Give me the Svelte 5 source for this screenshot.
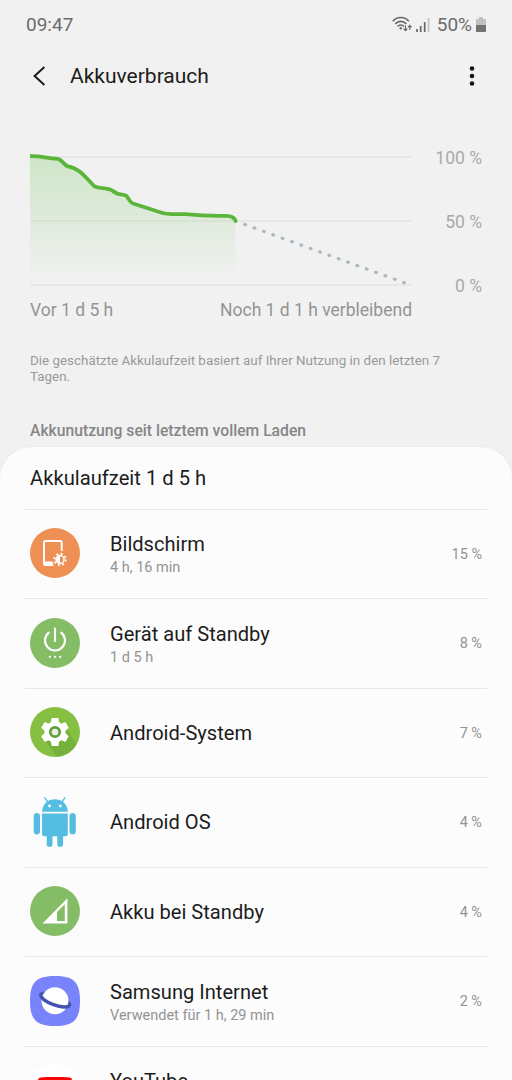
<script lang="ts">
    type App = { icon: string; name: string; detail?: string; percent?: number }

    const apps: App[] = [
        { icon: 'screen', name: 'Bildschirm', detail: '4 h, 16 min', percent: 15 },
        { icon: 'power', name: 'Gerät auf Standby', detail: '1 d 5 h', percent: 8 },
        { icon: 'gear', name: 'Android-System', percent: 7 },
        { icon: 'android', name: 'Android OS', percent: 4 },
        { icon: 'signal', name: 'Akku bei Standby', percent: 4 },
        { icon: 'internet', name: 'Samsung Internet', detail: 'Verwendet für 1 h, 29 min', percent: 2 },
        { icon: 'youtube', name: 'YouTube' }
    ]

    const level = 'M0 6.2 C12 5.8 16 8.5 28 8.8 C33 10 33 15 38 16.3 C50 18.5 56 28 64 36 C69 39.5 77 36.5 83 41 C88 45.5 92 44 96 45.5 C99 48 99 52 103 53.5 L131 62.5 C137 64.8 145 64 155 64.2 C168 65.5 180 66 196 65.8 C202 66 205 68.5 205.5 71'
</script>

<div class="screen">
    <div class="status">
        <span>09:47</span>
        <div class="status-right">
            <svg class="wifi" viewBox="0 0 20 16" width="20" height="16">
                <g fill="none" stroke="#666" stroke-width="1.6">
                    <path d="M.8 5.2 C5 .2 12.5 .2 16.8 5.2" />
                    <path d="M3.2 8 C6.3 4.5 11.3 4.5 14.4 8" />
                    <path d="M5.6 10.5 C7.5 8.5 10 8.5 12 10.5" />
                    <path d="M13.5 9.5 V14.5 M11.7 12.7 L13.5 14.6 L15.3 12.7 M17.8 14 V9.5 M16 11.3 L17.8 9.4 L19.6 11.3" stroke-width="1.1" />
                </g>
                <circle cx="8.8" cy="12.2" r="1.2" fill="#666" />
            </svg>
            <svg class="bars" viewBox="0 0 14 15" width="14" height="15">
                <path d="M1 12 V15 M4.7 9 V15 M8.7 5 V15" stroke="#666" stroke-width="1.7" />
                <path d="M12.6 1 V15" stroke="#c4c4c4" stroke-width="1.7" />
            </svg>
            <span>50%</span>
            <svg class="battery" viewBox="0 0 10 15" width="10" height="15">
                <path d="M3 0 H7 V2 H9.2 Q10 2 10 2.8 V8 H0 V2.8 Q0 2 .8 2 H3z" fill="#c0c0c0" />
                <path d="M0 8 H10 V14.2 Q10 15 9.2 15 H.8 Q0 15 0 14.2z" fill="#727272" />
            </svg>
        </div>
    </div>

    <header>
        <svg class="back" viewBox="0 0 14 20" width="14" height="20">
            <path d="M12.4 1 L2.6 10 L12.4 19" fill="none" stroke="#1c1c1c" stroke-width="2" />
        </svg>
        <h1>Akkuverbrauch</h1>
        <svg viewBox="0 0 6 20" width="6" height="20" fill="#161616">
            <circle cx="3" cy="2.5" r="2.3" />
            <circle cx="3" cy="10" r="2.3" />
            <circle cx="3" cy="17.5" r="2.3" />
        </svg>
    </header>

    <div class="chart">
        <svg viewBox="0 0 382 144" width="382" height="144">
            <defs>
                <linearGradient id="fade" x1="0" y1="0" x2="0" y2="1">
                    <stop offset="0" stop-color="#62c14a" stop-opacity=".25" />
                    <stop offset="1" stop-color="#62c14a" stop-opacity="0" />
                </linearGradient>
            </defs>
            <path d="M0 7 H382 M0 71 H382 M0 135 H382" stroke="#e4e4e4" stroke-width="1.3" />
            <path d="{level} V133 H0z" fill="url(#fade)" />
            <path d={level} fill="none" stroke="#5bb53b" stroke-width="3.8" stroke-linejoin="round" />
            <circle cx="205.6" cy="71" r="1.9" fill="#5bb53b" />
            <path d="M214.8 74.5 L375 133" stroke="#adb9c0" stroke-width="3.2" stroke-linecap="round" stroke-dasharray=".8 9.15" />
        </svg>
        <div class="scale">
            <span>100 %</span>
            <span>50 %</span>
            <span>0 %</span>
        </div>
    </div>
    <div class="range">
        <span>Vor 1 d 5 h</span>
        <span>Noch 1 d 1 h verbleibend</span>
    </div>

    <p class="hint">Die geschätzte Akkulaufzeit basiert auf Ihrer Nutzung in den letzten 7 Tagen.</p>
    <h2>Akkunutzung seit letztem vollem Laden</h2>

    <div class="card">
        <div class="total">Akkulaufzeit 1 d 5 h</div>
        {#each apps as app}
            <div class="row">
                <svg class="icon" viewBox="0 0 50 50" width="50" height="50">
                    {#if app.icon == 'screen'}
                        <circle cx="25" cy="25" r="25" fill="#ee8f53" />
                        <path d="M31.7 23 V14.5 Q31.7 13 30.2 13 H15.5 Q14 13 14 14.5 V35.5 Q14 37 15.5 37 H22" fill="none" stroke="#fff" stroke-width="1.9" />
                        <path d="M14 33.5 H22.5 L23.5 37.9 H15 Q13.5 37.5 13.5 36z" fill="#fff" />
                        <circle cx="30" cy="31.5" r="5.7" fill="none" stroke="#fff" stroke-width="2" stroke-dasharray="1.9 2.576" />
                        <circle cx="30" cy="31.5" r="4" fill="#ee8f53" stroke="#fff" stroke-width="1.5" />
                        <path d="M30 27.5 A4 4 0 0 0 30 35.5z" fill="#fff" />
                    {:else if app.icon == 'power'}
                        <circle cx="25" cy="25" r="25" fill="#85bd67" />
                        <path d="M18.8 14.6 A10 10 0 1 0 31.2 14.6 M25 10.5 V23" fill="none" stroke="#fff" stroke-width="2.1" stroke-linecap="round" />
                        <g fill="#fff">
                            <circle cx="19.8" cy="38.8" r="1.1" />
                            <circle cx="25" cy="38.8" r="1.1" />
                            <circle cx="30.2" cy="38.8" r="1.1" />
                        </g>
                    {:else if app.icon == 'gear'}
                        <circle cx="25" cy="25" r="25" fill="#86c043" />
                        <path d="M14 33 L27.5 49.8 Q40 48.5 46.5 37.5 L36 20z" fill="#76b13b" />
                        <path transform="translate(8.2 8.2) scale(1.4)" d="M19.43 12.98c.04-.32.07-.64.07-.98s-.03-.66-.07-.98l2.11-1.65c.19-.15.24-.42.12-.64l-2-3.46c-.12-.22-.39-.3-.61-.22l-2.49 1c-.52-.4-1.08-.73-1.69-.98l-.38-2.65C14.46 2.18 14.25 2 14 2h-4c-.25 0-.46.18-.49.42l-.38 2.65c-.61.25-1.17.59-1.69.98l-2.49-1c-.23-.09-.49 0-.61.22l-2 3.46c-.13.22-.07.49.12.64l2.11 1.65c-.04.32-.07.65-.07.98s.03.66.07.98l-2.11 1.65c-.19.15-.24.42-.12.64l2 3.46c.12.22.39.3.61.22l2.49-1c.52.4 1.08.73 1.69.98l.38 2.65c.03.24.24.42.49.42h4c.25 0 .46-.18.49-.42l.38-2.65c.61-.25 1.17-.59 1.69-.98l2.49 1c.23.09.49 0 .61-.22l2-3.46c.12-.22.07-.49-.12-.64l-2.11-1.65z" fill="#fff" />
                        <circle cx="25" cy="25" r="4.7" fill="#e9f2e0" stroke="#5f9e3c" stroke-width="2.7" />
                    {:else if app.icon == 'android'}
                        <g fill="#55bde2">
                            <path d="M12 14.7 C12.3 7 18 2.2 24.9 2.2 C31.8 2.2 37.5 7 37.8 14.7z" />
                            <path d="M12 16.6 H37.8 V37 Q37.8 39.2 35.6 39.2 H14.2 Q12 39.2 12 37z" />
                            <rect x="3.7" y="16" width="6.3" height="21.5" rx="3.15" />
                            <rect x="39.5" y="16" width="6.3" height="21.5" rx="3.15" />
                            <rect x="16.7" y="34" width="5.8" height="15.8" rx="2.9" />
                            <rect x="27.3" y="34" width="5.8" height="15.8" rx="2.9" />
                        </g>
                        <path d="M14.8 .8 L17.8 5 M34.8 .8 L31.8 5" stroke="#55bde2" stroke-width="1.4" stroke-linecap="round" />
                        <circle cx="19.5" cy="9" r="1.4" fill="#fff" />
                        <circle cx="30.3" cy="9" r="1.4" fill="#fff" />
                    {:else if app.icon == 'signal'}
                        <circle cx="25" cy="25" r="25" fill="#85bd67" />
                        <path d="M12.5 37.5 L37.4 12.3 V37.5z M27 26 V34.9 H34.8 V18.3z" fill="#fff" fill-rule="evenodd" />
                    {:else if app.icon == 'internet'}
                        <path d="M25 0 C43 0 50 5.5 50 25 C50 44.5 43 50 25 50 C7 50 0 44.5 0 25 C0 5.5 7 0 25 0z" fill="#7983fb" />
                        <ellipse cx="25" cy="23.8" rx="15.3" ry="5" transform="rotate(20 25 24.5)" fill="none" stroke="#4352b0" stroke-width="2.4" />
                        <circle cx="25" cy="24.7" r="13.5" fill="#fff" />
                        <path transform="rotate(20 25 24.5)" d="M9.7 23.5 C10 30.8 40 30.8 40.3 23.5" fill="none" stroke="#4352b0" stroke-width="3.4" stroke-linecap="round" />
                    {:else}
                        <path d="M25 0 C43 0 50 5.5 50 25 C50 44.5 43 50 25 50 C7 50 0 44.5 0 25 C0 5.5 7 0 25 0z" fill="#fff" />
                        <path d="M25 12 C34 12 39 12.2 41 13 Q43 15 43 25 Q43 37 40 37.5 Q25 39 10 37.5 Q7 37 7 25 Q7 15 9 13 C11 12.2 16 12 25 12z" fill="#f00" />
                        <path d="M21 19 L31 25 L21 31z" fill="#fff" />
                    {/if}
                </svg>
                <div class="text" class:two-lines={app.detail} class:raised={app.icon == 'youtube'}>
                    <span class="name">{app.name}</span>
                    {#if app.detail}
                        <span class="detail">{app.detail}</span>
                    {/if}
                </div>
                {#if app.percent}
                    <span class="percent">{app.percent} %</span>
                {/if}
            </div>
        {/each}
    </div>
</div>

<style>
:global(body) {
    margin: 0;
    overflow: hidden;
    background: #f1f1f1;
}
.screen {
    box-sizing: border-box;
    width: 512px;
    height: 1080px;
    overflow: hidden;
    display: flex;
    flex-direction: column;
    background: #f1f1f1;
    color: #1c1c1c;
    font-family: Roboto, sans-serif;
}
.screen > * {
    flex-shrink: 0;
}
svg {
    display: block;
    flex-shrink: 0;
}
.status {
    display: flex;
    justify-content: space-between;
    align-items: center;
    height: 48px;
    padding: 0 26px;
    font-size: 19px;
    color: #6c6c6c;
}
.status-right {
    display: flex;
    align-items: center;
}
.bars {
    margin: 0 7px 0 4px;
}
.battery {
    margin-left: 4px;
}
header {
    display: flex;
    align-items: center;
    height: 51px;
    margin-top: 2px;
    padding: 0 37px 0 32px;
}
h1 {
    flex: 1;
    margin: 0 0 0 24px;
    font-size: 21px;
    line-height: 24px;
    font-weight: 400;
}
.chart {
    display: flex;
    justify-content: space-between;
    margin: 49px 30px 0;
    height: 144px;
}
.scale {
    display: flex;
    flex-direction: column;
    gap: 44px;
    margin-top: -2px;
    font-size: 17.5px;
    line-height: 20px;
    text-align: right;
    color: #aaa;
}
.range {
    display: flex;
    justify-content: space-between;
    margin: 5px 100px 0 30px;
    font-size: 17.5px;
    line-height: 22px;
    color: #949494;
}
.hint {
    width: 440px;
    margin: 32px 0 0 30px;
    font-size: 13.4px;
    line-height: 16px;
    color: #999;
}
h2 {
    margin: 36px 0 0 30px;
    font-size: 15.7px;
    line-height: 20px;
    font-weight: 500;
    color: #868686;
}
.card {
    margin-top: 6px;
    height: 660px;
    border-radius: 32px 32px 0 0;
    background: #fcfcfc;
    box-shadow: 0 0 0 1px #ececec;
}
.total {
    height: 61.5px;
    padding: 0 30px;
    font-size: 20.2px;
    line-height: 63px;
}
.row {
    box-sizing: border-box;
    display: flex;
    align-items: center;
    height: 89.5px;
    margin: 0 25px;
    padding: 0 5px;
    border-top: 1px solid #e7e7e7;
}
.icon {
    margin-top: -1px;
}
.text {
    flex: 1;
    display: flex;
    flex-direction: column;
    margin-left: 30px;
}
.two-lines {
    padding-top: 4px;
}
.raised {
    padding: 0 0 20px;
}
.name {
    font-size: 20.1px;
    line-height: 24px;
}
.detail {
    font-size: 14.5px;
    line-height: 22px;
    color: #939393;
}
.two-lines .detail {
    padding-top: 1px;
}
.percent {
    padding-top: 1px;
    font-size: 14.5px;
    color: #939393;
}
</style>
